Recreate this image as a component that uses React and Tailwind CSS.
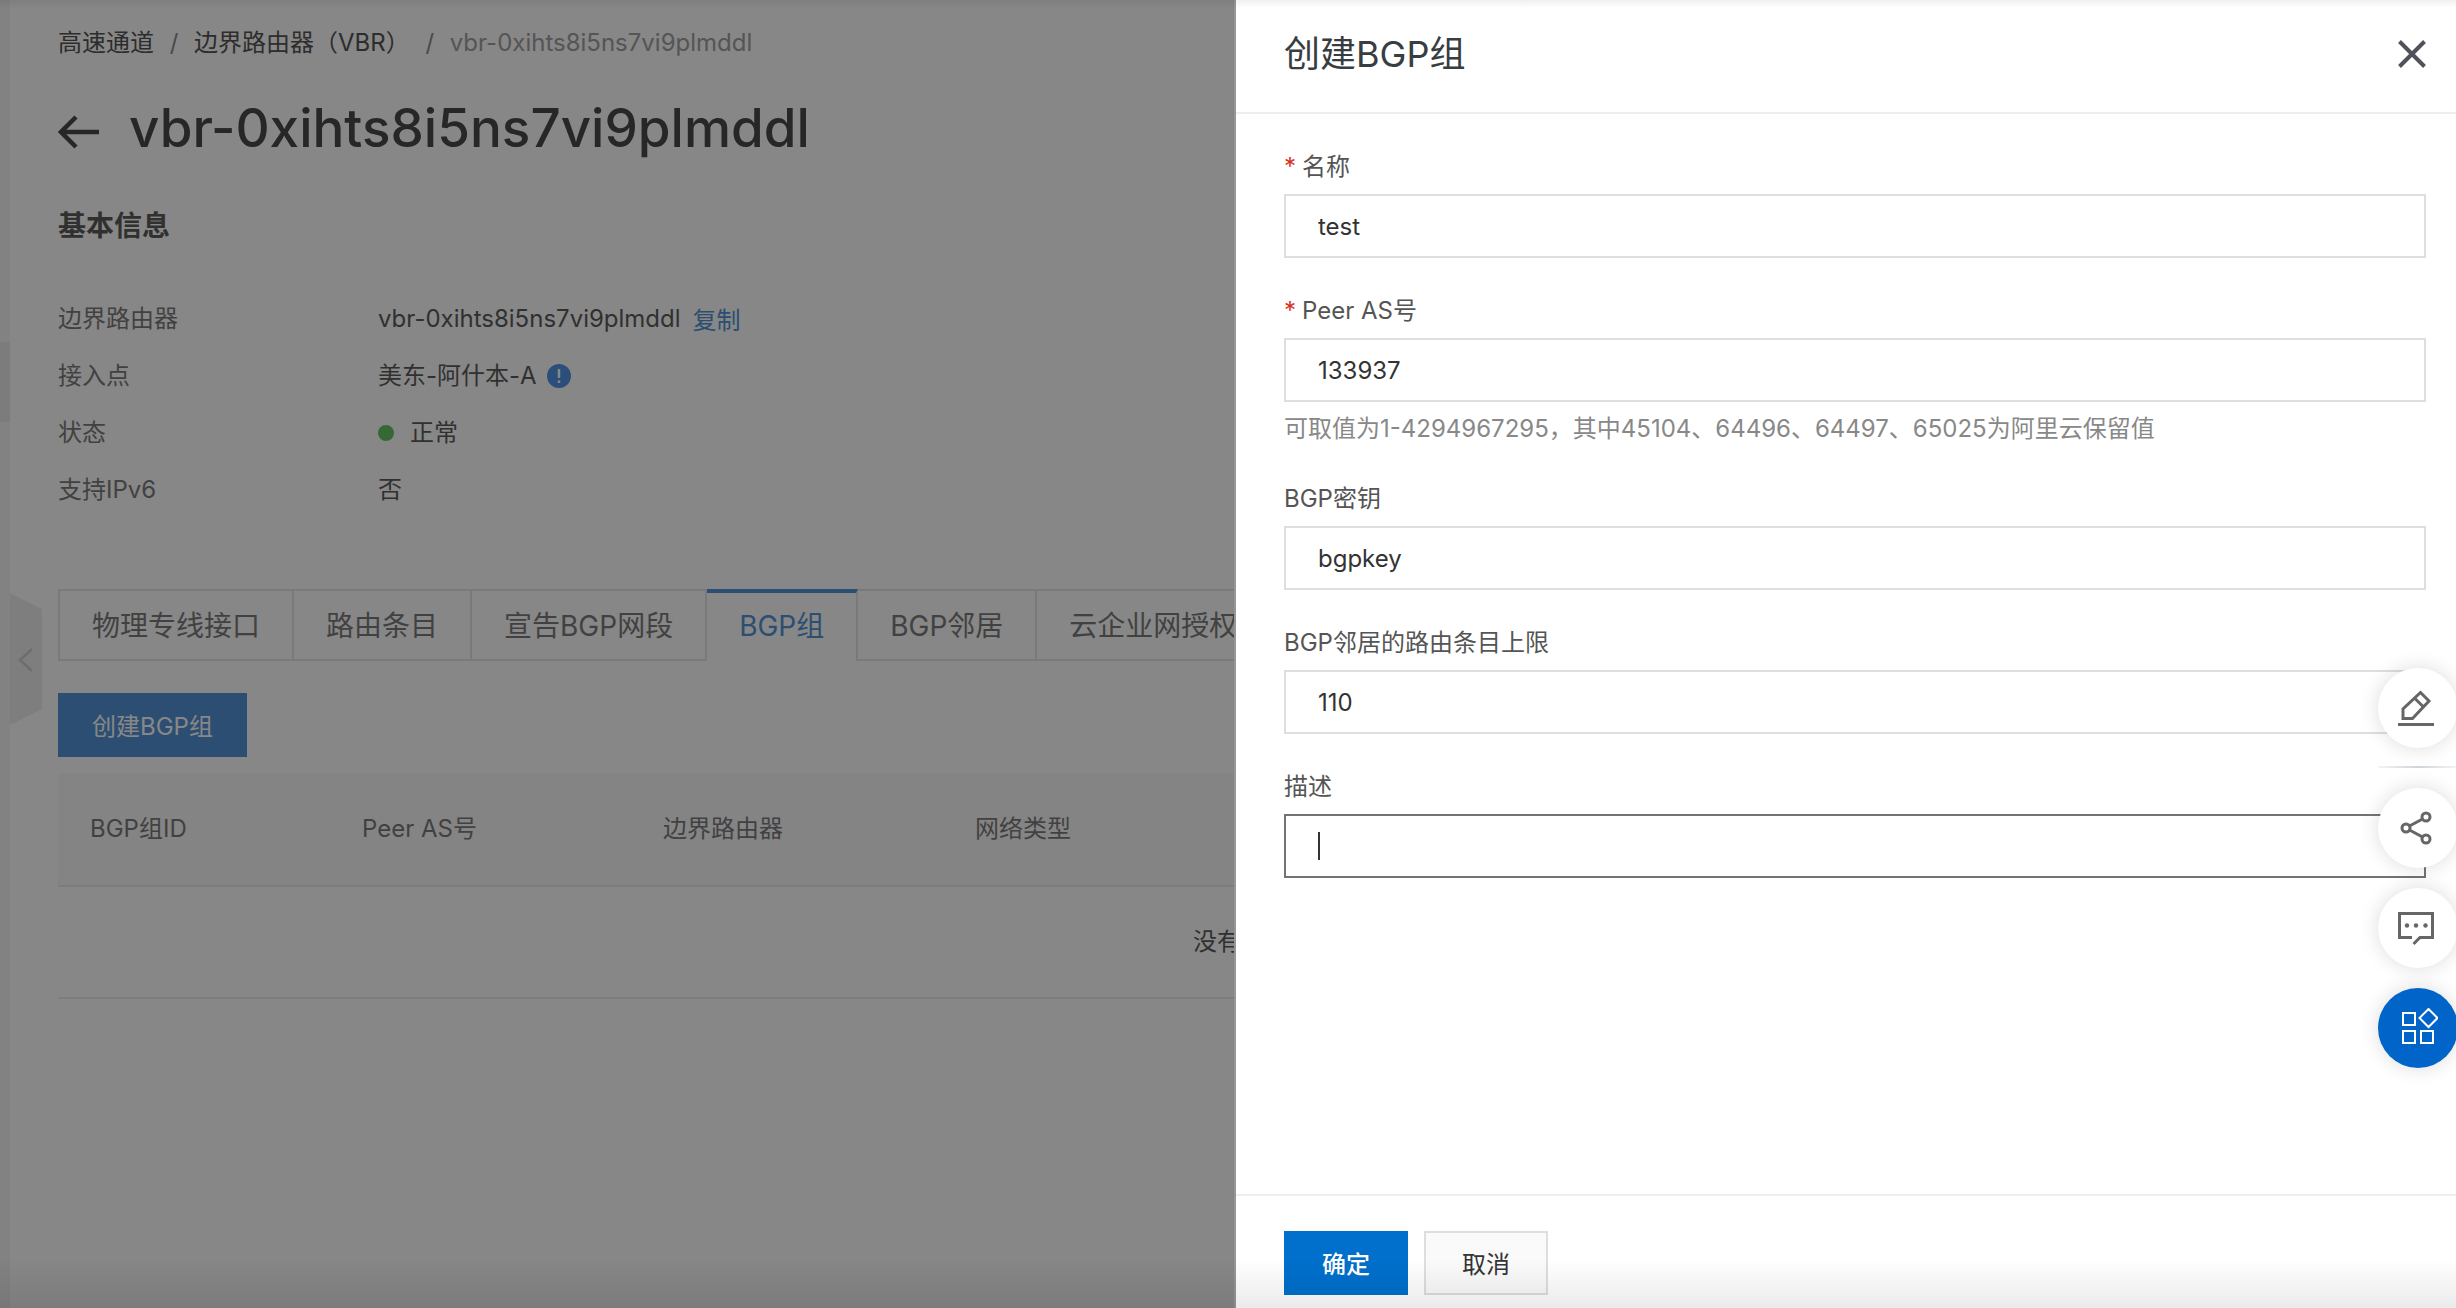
import { useState } from 'react'

const tabs = ['物理专线接口', '路由条目', '宣告BGP网段', 'BGP组', 'BGP邻居', '云企业网授权']

const columns = [
  { name: 'BGP组ID', width: 'w-[272px]' },
  { name: 'Peer AS号', width: 'w-[301px]' },
  { name: '边界路由器', width: 'w-[312px]' },
  { name: '网络类型', width: 'w-auto' },
]

function InfoRow({ label, children }) {
  return (
    <div className="flex h-[57px] items-center">
      <dt className="w-80 text-[#7c7c7c]">{label}</dt>
      <dd className="flex items-center text-[#5c5c5c]">{children}</dd>
    </div>
  )
}

function Field({ id, label, required, hint, focused, value, onChange }) {
  return (
    <div className="mb-8">
      <label htmlFor={id} className="mb-1.5 flex h-[42px] items-center text-[#555]">
        {required && <span className="mr-1.5 w-3 text-[#d93026]">*</span>}
        {label}
      </label>
      <div className="relative">
        <input
          id={id}
          type="text"
          value={value}
          onChange={(e) => onChange(id, e.target.value)}
          className={`block h-16 w-full border-2 bg-white px-8 text-[#333] outline-none ${focused ? 'border-[#737373]' : 'border-[#dedede]'}`}
        />
        {focused && <span className="absolute top-[18px] left-[34px] h-7 w-0.5 bg-[#333]" />}
      </div>
      {hint && <p className="mt-2.5 leading-[34px] text-[#888]">{hint}</p>}
    </div>
  )
}

function FloatButton({ label, primary, children }) {
  return (
    <button
      type="button"
      aria-label={label}
      className={`flex size-20 items-center justify-center rounded-full shadow-[0_0_20px_rgba(0,0,0,0.14)] ${primary ? 'bg-[#0064c8] text-white' : 'bg-white pr-1 text-[#666]'}`}
    >
      {children}
    </button>
  )
}

function RouterPage() {
  const [active, setActive] = useState('BGP组')

  return (
    <div className="flex min-h-screen bg-white">
      <aside className="relative w-[10px] shrink-0 bg-[#f6f6f6]">
        <div className="absolute top-[342px] left-0 h-20 w-[10px] bg-[#ebebeb]" />
        <button type="button" aria-label="收起" className="absolute top-[593px] left-[10px] h-[132px] w-8">
          <svg viewBox="0 0 32 132" className="h-full w-full">
            <path d="M0 0L32 16V116L0 132Z" fill="#efefef" />
            <path d="M22 56L10 67L22 78" fill="none" stroke="#cfcfcf" strokeWidth="2.5" />
          </svg>
        </button>
      </aside>

      <main className="min-w-0 flex-1 pr-8 pl-12">
        <nav className="flex h-[86px] items-center text-[#555]">
          <a href="#express">高速通道</a>
          <span className="w-10 text-center text-[#8c8c8c]">/</span>
          <a href="#vbr">边界路由器（VBR）</a>
          <span className="w-10 text-center text-[#8c8c8c]">/</span>
          <span className="text-[#a0a0a0]">vbr-0xihts8i5ns7vi9plmddl</span>
        </nav>

        <div className="flex h-[84px] items-center">
          <a href="#back" aria-label="返回" className="mt-2 mr-[30px]">
            <svg viewBox="0 0 41 34" className="h-[34px] w-[41px]" fill="none" stroke="#4b4b4b" strokeWidth="4.5">
              <path d="M18 2L3 17L18 32M3 17H41" />
            </svg>
          </a>
          <h1 className="text-[53px] font-medium text-[#4b4b4b]">vbr-0xihts8i5ns7vi9plmddl</h1>
        </div>

        <h2 className="mt-9 text-[28px] leading-10 font-semibold text-[#5c5c5c]">基本信息</h2>

        <dl className="mt-11">
          <InfoRow label="边界路由器">
            vbr-0xihts8i5ns7vi9plmddl
            <a href="#copy" className="mt-1 ml-3 text-[#5393d9]">复制</a>
          </InfoRow>
          <InfoRow label="接入点">
            美东-阿什本-A
            <svg viewBox="0 0 24 24" className="ml-2.5 size-6">
              <circle cx="12" cy="12" r="12" fill="#5393e6" />
              <path d="M12 5V14M12 16.500V19" stroke="#fff" strokeWidth="2.5" />
            </svg>
          </InfoRow>
          <InfoRow label="状态">
            <span className="mr-4 size-4 rounded-full bg-[#62c465]" />
            正常
          </InfoRow>
          <InfoRow label="支持IPv6">否</InfoRow>
        </dl>

        <div role="tablist" className="mt-[71px] flex h-[72px] overflow-hidden text-[28px] whitespace-nowrap">
          {tabs.map((tab) => (
            <button
              key={tab}
              type="button"
              role="tab"
              aria-selected={tab === active}
              onClick={() => setActive(tab)}
              className={
                tab === active
                  ? 'border-t-4 border-r-2 border-t-[#5393d9] border-r-[#e6e6e6] px-8 pb-0.5 text-[#5393d9]'
                  : 'border-y-2 border-r-2 border-[#e6e6e6] px-8 pt-0.5 text-[#7c7c7c] first:border-l-2'
              }
            >
              {tab}
            </button>
          ))}
        </div>

        <button type="button" className="mt-8 block h-16 bg-[#5393d9] px-[34px] pt-1 text-white">
          创建BGP组
        </button>

        <table className="mt-4 w-full table-fixed text-left">
          <thead>
            <tr className="h-[113px] border-b-2 border-[#ececec] bg-[#fafafa]">
              {columns.map((col) => (
                <th key={col.name} className={`px-8 font-normal text-[#7c7c7c] ${col.width}`}>{col.name}</th>
              ))}
            </tr>
          </thead>
          <tbody>
            <tr className="h-28 border-b-2 border-[#ececec]">
              <td colSpan={columns.length} className="text-center text-[#5c5c5c]">没有数据</td>
            </tr>
          </tbody>
        </table>
      </main>
    </div>
  )
}

function CreateDrawer() {
  const [form, setForm] = useState({
    name: 'test',
    peerAs: '133937',
    bgpKey: 'bgpkey',
    routeLimit: '110',
    description: '',
  })
  const update = (id, value) => setForm({ ...form, [id]: value })

  return (
    <section
      role="dialog"
      aria-label="创建BGP组"
      className="fixed inset-y-0 right-0 flex w-[1222px] max-w-full flex-col border-l-2 border-[#969696] bg-white"
    >
      <header className="flex h-[114px] shrink-0 items-center justify-between border-b-2 border-[#eee] pr-[30px] pb-1 pl-12">
        <h2 className="text-4xl text-[#373d41]">创建BGP组</h2>
        <button type="button" aria-label="关闭">
          <svg viewBox="0 0 28 28" className="size-7" fill="none" stroke="#505259" strokeWidth="4">
            <path d="M1.500 1.500L26.500 26.500M26.500 1.500L1.500 26.500" />
          </svg>
        </button>
      </header>

      <form className="min-h-0 flex-1 overflow-hidden pt-8 pr-[30px] pl-12">
        <Field id="name" label="名称" required value={form.name} onChange={update} />
        <Field
          id="peerAs"
          label="Peer AS号"
          required
          hint="可取值为1-4294967295，其中45104、64496、64497、65025为阿里云保留值"
          value={form.peerAs}
          onChange={update}
        />
        <Field id="bgpKey" label="BGP密钥" value={form.bgpKey} onChange={update} />
        <Field id="routeLimit" label="BGP邻居的路由条目上限" value={form.routeLimit} onChange={update} />
        <Field id="description" label="描述" focused value={form.description} onChange={update} />
      </form>

      <footer className="flex h-[114px] shrink-0 gap-4 border-t-2 border-[#eee] pt-[35px] pl-12">
        <button type="button" className="h-16 w-[124px] bg-[#0070cc] pt-1 font-medium text-white">确定</button>
        <button type="button" className="h-16 w-[124px] border-2 border-[#dedede] bg-[#fafafa] pt-1 text-[#333]">取消</button>
      </footer>
    </section>
  )
}

function FloatTools() {
  return (
    <div className="fixed top-[668px] -right-0.5 flex w-20 flex-col">
      <FloatButton label="编辑">
        <svg viewBox="0 0 36 36" className="size-9" fill="none" stroke="currentColor" strokeWidth="3">
          <path d="M5 28.500V19L22.500 2.500L31 11L14.500 28.500ZM16.500 8L25.500 17M0 34.500H36" />
        </svg>
      </FloatButton>
      <div className="my-[18px] h-0.5 bg-linear-to-r from-[#f4f4f4] via-[#cfd5db] to-[#f4f4f4]" />
      <div className="mt-0.5 flex flex-col gap-5">
        <FloatButton label="分享">
          <svg viewBox="0 0 36 36" className="size-9" fill="none" stroke="currentColor" strokeWidth="3">
            <circle cx="8" cy="18" r="4" />
            <circle cx="28" cy="7" r="4" />
            <circle cx="28" cy="29" r="4" />
            <path d="M11.500 16L24.500 9M11.500 20L24.500 27" />
          </svg>
        </FloatButton>
        <FloatButton label="反馈">
          <svg viewBox="0 0 36 36" className="size-9" fill="none" stroke="currentColor" strokeWidth="3">
            <path d="M14 27.500H1.500V3.500H34.500V27.500H22L15.500 34" />
            <g fill="currentColor" stroke="none">
              <circle cx="9" cy="15.500" r="2.200" />
              <circle cx="18" cy="15.500" r="2.200" />
              <circle cx="27.500" cy="15.500" r="2.200" />
            </g>
          </svg>
        </FloatButton>
        <FloatButton label="应用" primary>
          <svg viewBox="0 0 40 40" className="size-10" fill="none" stroke="currentColor" strokeWidth="2">
            <path d="M5 5H17V17H5ZM5 23H17V35H5ZM23 23H35V35H23ZM30.500 1L39.500 10L30.500 19L21.500 10Z" />
          </svg>
        </FloatButton>
      </div>
    </div>
  )
}

export default function App() {
  return (
    <div className="font-['Inter','Noto_Sans_CJK_SC',sans-serif] text-2xl leading-9">
      <RouterPage />
      <div className="fixed inset-0 bg-black/47" />
      <CreateDrawer />
      <FloatTools />
      {/* soft edges of the scroll viewport */}
      <div className="pointer-events-none fixed inset-x-0 top-0 h-2 bg-linear-to-b from-black/6 to-transparent" />
      <div className="pointer-events-none fixed inset-x-0 bottom-0 h-12 bg-linear-to-t from-black/8 to-transparent" />
    </div>
  )
}
